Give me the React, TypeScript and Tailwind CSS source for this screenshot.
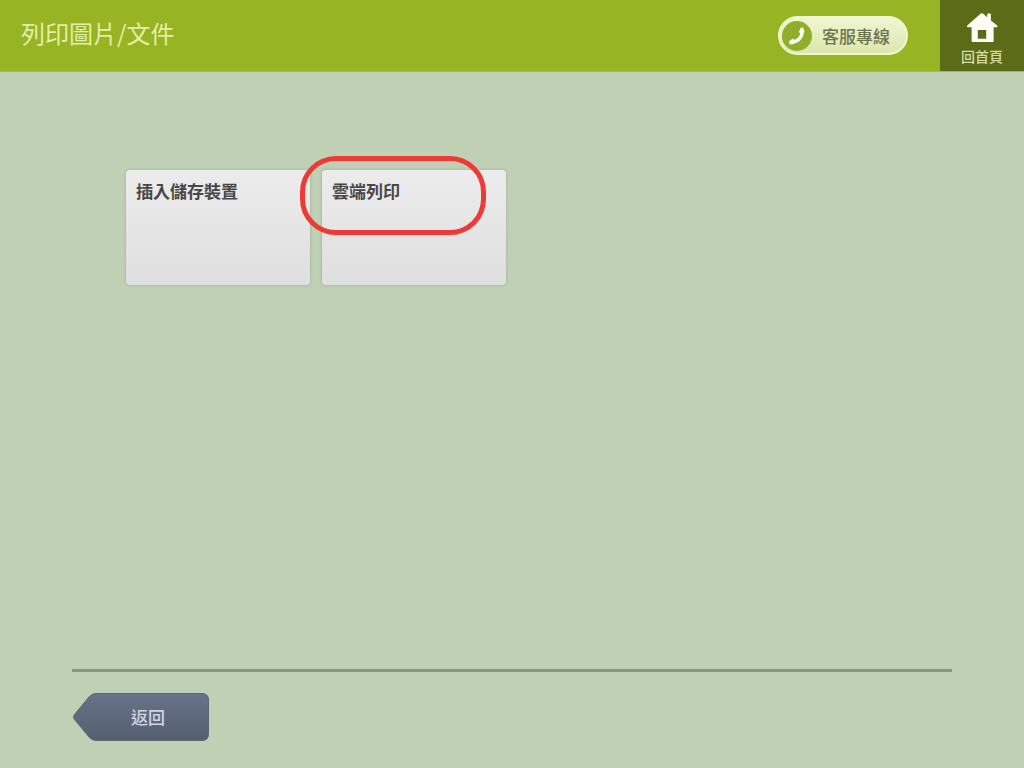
function PhoneIcon() {
  return (
    <svg viewBox="0 0 30 30" className="size-[30px] shrink-0" aria-hidden="true">
      <circle cx="15" cy="15" r="15" fill="#8fae2b" />
      <path
        d="M20.3 10 Q20.2 15 17.2 18 Q14.2 20.9 9.6 21"
        fill="none"
        stroke="#fbfdf0"
        strokeWidth="3.4"
        strokeLinecap="round"
      />
      <path
        d="M18.9 7.2 L20.9 7 L22 11.2 L19 12.6 L17.4 11.2 Z M7.2 20.7 L10.6 18.3 L12.8 19.6 L12 22.4 L8 22.9 Z"
        fill="#fbfdf0"
        stroke="#fbfdf0"
        strokeWidth="1"
        strokeLinejoin="round"
      />
    </svg>
  );
}

function HomeIcon() {
  return (
    <svg viewBox="0 0 32 30" className="h-[30px] w-8" aria-hidden="true">
      <path
        fillRule="evenodd"
        d="M14.8 1.6 Q15.8 0.8 16.9 1.6 L21.2 5.2 V2.4 Q21.2 1.5 22 1.5 H24 Q24.9 1.5 24.9 2.4 V8.5 L31.2 13.4 Q31.9 14 31.5 14.7 Q31 15.3 30.2 15.3 H27.6 V29 Q27.6 30 26.6 30 H6.6 Q5.6 30 5.6 29 V15.3 H2.2 Q0.8 15.3 0.9 14.2 Q1 13.7 1.5 13.2 Z M11.8 18 V26.8 H20.2 V18 Z"
        fill="#fdfdf6"
      />
    </svg>
  );
}

function OptionCard({ label, highlighted = false }: { label: string; highlighted?: boolean }) {
  return (
    <div className="relative w-[184px]">
      <button
        type="button"
        className="flex h-[115px] w-full items-start rounded-[4px] bg-linear-to-b from-[#ececec] to-[#dfdfdf] px-[10px] pt-[9px] text-[17px] leading-6 font-bold text-[#484848] shadow-[0_0_2px_1px_rgba(130,145,130,0.3)]"
      >
        {label}
      </button>
      {highlighted && (
        <span className="pointer-events-none absolute -top-[14px] -left-[22px] h-[79px] w-[186px] rounded-[36px] border-[5px] border-[#ee3a36]" />
      )}
    </div>
  );
}

export default function App() {
  return (
    <div className="flex min-h-screen flex-col bg-[#bfd0b5] font-['Noto_Sans_CJK_TC',sans-serif]">
      <header className="flex h-[72px] items-stretch border-b border-[#a3b75c] bg-[#97b425]">
        <h1 className="flex-1 pt-[17px] pl-[21px] text-2xl leading-8 font-normal text-[#e4efa6]">
          列印圖片/文件
        </h1>
        <button
          type="button"
          className="mr-8 flex h-[39px] items-center gap-[10px] self-center rounded-full border-2 border-[#f0f6cc] bg-linear-to-b from-[#f0f6d2] to-[#dbe7ae] pr-4 pl-[2px] text-[17px] leading-6 font-medium text-[#6d7450]"
        >
          <PhoneIcon />
          客服專線
        </button>
        <a
          href="#home"
          className="flex w-[84px] flex-col items-center bg-[#5c6b18] pt-3 text-sm leading-7 font-medium text-[#d3dba6]"
        >
          <HomeIcon />
          回首頁
        </a>
      </header>

      <main className="flex flex-1 flex-wrap content-start gap-3 px-[126px] pt-[98px]">
        <OptionCard label="插入儲存裝置" />
        <OptionCard label="雲端列印" highlighted />
      </main>

      <footer className="mx-[72px] border-t-[3px] border-[#869784] pt-[21px] pb-[27px]">
        <button type="button" className="relative ml-px flex h-12 w-[136px] items-center justify-center pl-[14px]">
          <svg viewBox="0 0 136 48" className="absolute inset-0 size-full" aria-hidden="true">
            <defs>
              <linearGradient id="backFill" x1="0" y1="0" x2="0" y2="1">
                <stop offset="0" stopColor="#68738a" />
                <stop offset="1" stopColor="#555f70" />
              </linearGradient>
            </defs>
            <path
              d="M23 0.5 H129 Q135.5 0.5 135.5 7 V41 Q135.5 47.5 129 47.5 H23 Q19 47.5 16 44 L1.5 26.5 Q-0.5 24 1.5 21.5 L16 4 Q19 0.5 23 0.5 Z"
              fill="url(#backFill)"
              stroke="#59647a"
            />
          </svg>
          <span className="relative text-[17px] leading-6 font-medium text-[#cfd6df]">返回</span>
        </button>
      </footer>
    </div>
  );
}
